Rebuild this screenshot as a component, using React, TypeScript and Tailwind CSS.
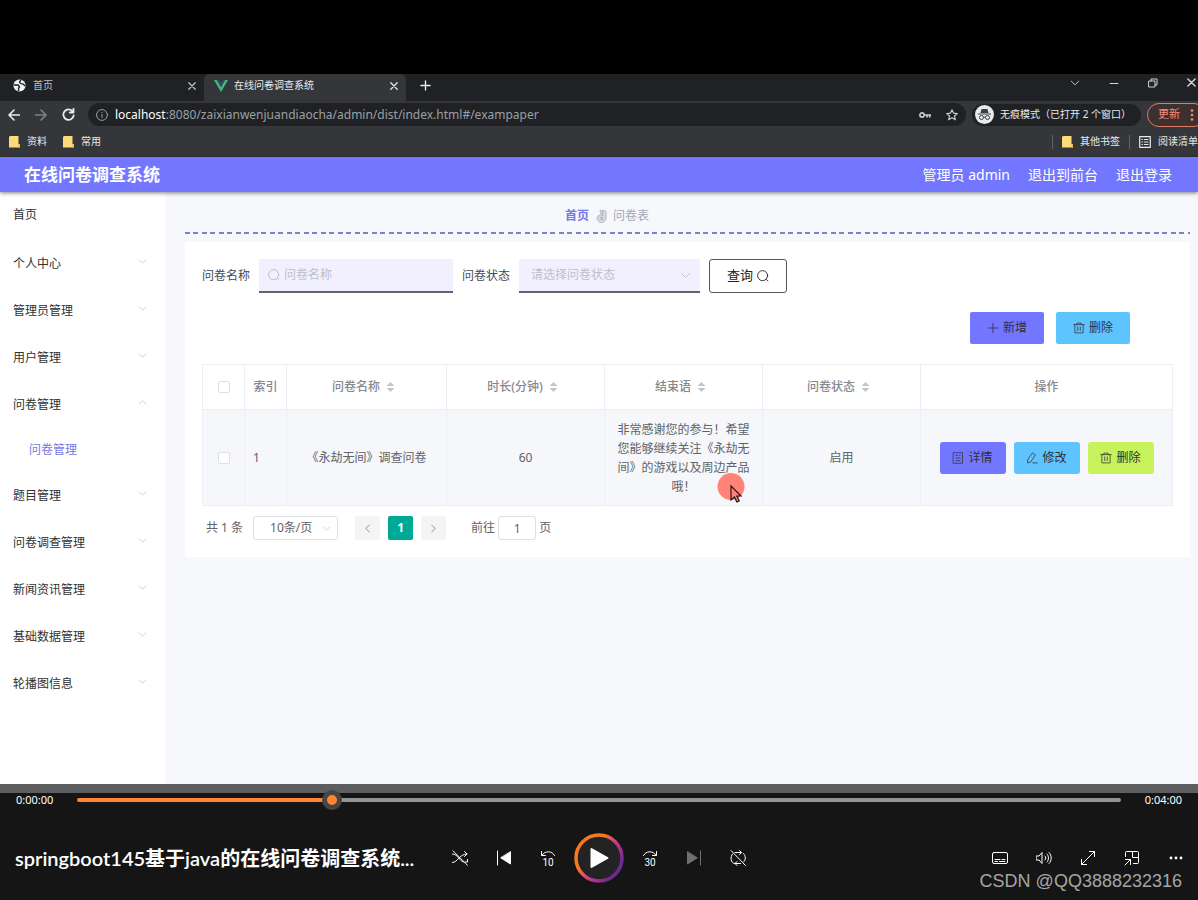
import { useState } from "react";
import type { CSSProperties, ReactNode } from "react";

const menu = [
  { label: "个人中心" },
  { label: "管理员管理" },
  { label: "用户管理" },
  { label: "问卷管理", children: ["问卷管理"] },
  { label: "题目管理" },
  { label: "问卷调查管理" },
  { label: "新闻资讯管理" },
  { label: "基础数据管理" },
  { label: "轮播图信息" },
];

const columns = ["问卷名称", "时长(分钟)", "结束语", "问卷状态"];

const rows = [
  {
    id: 1,
    name: "《永劫无间》调查问卷",
    minutes: 60,
    ending: "非常感谢您的参与！希望您能够继续关注《永劫无间》的游戏以及周边产品哦！",
    status: "启用",
  },
];

type IconProps = { className?: string; box?: number; width?: number; children: ReactNode };

function Icon({ className = "size-4", box = 16, width = 1, children }: IconProps) {
  return (
    <svg
      className={`shrink-0 ${className}`}
      viewBox={`0 0 ${box} ${box}`}
      fill="none"
      stroke="currentColor"
      strokeWidth={width}
      strokeLinecap="round"
      strokeLinejoin="round"
      aria-hidden="true"
    >
      {children}
    </svg>
  );
}

const Chevron = ({ className = "size-3", up = false }: { className?: string; up?: boolean }) => (
  <Icon className={className} width={1.4}>
    <path d={up ? "M2 11 8 5l6 6" : "M2 5l6 6 6-6"} />
  </Icon>
);

const SearchIcon = ({ className }: { className?: string }) => (
  <Icon className={className} width={1.2}>
    <circle cx="7.5" cy="7.5" r="6.7" />
    <path d="m12.3 12.5 2.2 2.2" />
  </Icon>
);

const TrashIcon = () => (
  <Icon className="size-3">
    <path d="M1 3.5h14M5 3.5v-2h6v2M2.5 3.5v11h11v-11M6.3 6.5v5M9.7 6.5v5" />
  </Icon>
);

const CloseIcon = ({ className = "size-2" }: { className?: string }) => (
  <Icon className={className} box={10} width={1.6}>
    <path d="m1 1 8 8M9 1 1 9" />
  </Icon>
);

const Folder = () => (
  <svg className="h-3 w-[11px] shrink-0" viewBox="0 0 11 12" aria-hidden="true">
    <path d="M1 0h8.5v8H11v3.5H0V1z" fill="#fddb7b" />
    <path d="M9.5 8H11v3.5H9.5z" fill="#e9b94e" />
  </svg>
);

function SortCaret() {
  return (
    <svg className="mr-1.5 mb-0.5 ml-1.5 inline-block h-3 w-[9px] fill-[#c0c4cc]" viewBox="0 0 9 12" aria-hidden="true">
      <path d="M4.5 1 8.5 5h-8zM4.5 11l-4-4h8z" />
    </svg>
  );
}

function BrowserChrome() {
  return (
    <div className="overflow-hidden bg-[#35363a] text-[10px] text-[#e8eaed]">
      <div className="flex h-[27px] bg-[#202124]">
        <div className="flex w-[204px] items-center pr-1 pb-1 pl-[13px]">
          <svg className="size-[13px]" viewBox="0 0 14 14" aria-hidden="true">
            <circle cx="7" cy="7" r="6.5" fill="#f1f3f4" />
            <path d="M1 6.5h4.5l1.5 2-1 1.5v3M8.5 1 7 3.5 8.5 5l2.5.5 2 2" fill="none" stroke="#202124" strokeWidth="1.5" />
          </svg>
          <span className="ml-[7px] flex-1 text-[#bdc1c6]">首页</span>
          <button aria-label="关闭首页" className="p-1 text-[#bdc1c6]"><CloseIcon /></button>
        </div>
        <div className="flex w-[202px] items-center rounded-t-md bg-[#35363a] pr-1 pb-1 pl-2.5">
          <svg className="h-3 w-[14px]" viewBox="0 0 14 12" aria-hidden="true">
            <path d="M0 0h3l4 7 4-7h3L7 12z" fill="#41b883" />
            <path d="M3 0h2.5L7 2.6 8.5 0H11L7 7z" fill="#35495e" />
          </svg>
          <span className="ml-1.5 flex-1">在线问卷调查系统</span>
          <button aria-label="关闭标签页" className="p-1"><CloseIcon /></button>
        </div>
        <button aria-label="新标签页" className="ml-3.5 self-center pb-1">
          <Icon className="size-[11px]" box={12} width={1.5}><path d="M6 1v10M1 6h10" /></Icon>
        </button>
        <div className="ml-auto flex items-center gap-[29px] pb-2.5 text-[#d0d2d5]">
          <button aria-label="搜索标签页"><Chevron className="size-[10px]" /></button>
          <button aria-label="最小化"><Icon className="size-[10px]" box={10}><path d="M1 5.5h8" /></Icon></button>
          <button aria-label="还原">
            <Icon className="size-[10px]" box={10}><path d="M1 3h6v6H1zM3 3V1h6v6H7" /></Icon>
          </button>
          <button aria-label="关闭窗口" className="pr-0.5"><CloseIcon className="size-[9px]" /></button>
        </div>
      </div>

      <div className="flex h-[27px] items-center">
        <div className="flex w-[88px] shrink-0 items-center gap-[15px] pl-2">
          <button aria-label="后退"><Icon className="size-3" box={12} width={1.6}><path d="M11.5 6H1M6 1 1 6l5 5" /></Icon></button>
          <button aria-label="前进" className="text-[#7e8185]"><Icon className="size-3" box={12} width={1.6}><path d="M.5 6H11M6 1l5 5-5 5" /></Icon></button>
          <button aria-label="刷新">
            <Icon className="size-[13px]" box={13} width={1.8}><path d="M10.8 3.6A5.2 5.2 0 1 0 11.7 7.5M11.5.8v3.7H7.8" /></Icon>
          </button>
        </div>
        <div className="flex h-[23px] flex-1 items-center rounded-full bg-[#202124] pr-2 pl-2">
          <Icon className="size-3 text-[#9aa0a6]" box={12}><circle cx="6" cy="6" r="5.4" /><path d="M6 5.5v3M6 3.4v.2" /></Icon>
          <p className="ml-[7px] flex-1 text-xs text-[#9aa0a6]">
            <span className="text-white">localhost</span>:8080/zaixianwenjuandiaocha/admin/dist/index.html#/exampaper
          </p>
          <svg className="h-2 w-3" viewBox="0 0 12 8" fill="none" stroke="#c6c9cc" strokeWidth="1.7" aria-hidden="true">
            <circle cx="3" cy="4" r="2.1" /><path d="M5.1 4H12M8 4v2.5M10.7 4v2.5" />
          </svg>
          <button aria-label="收藏" className="ml-[15px]">
            <Icon className="size-3 text-[#c6c9cc]" width={1.6}><path d="m8 1 2.1 4.6 5 .5-3.8 3.3 1.2 5L8 11.8l-4.5 2.6 1.2-5L.9 6.1l5-.5z" /></Icon>
          </button>
        </div>
        <div className="mx-1.5 flex h-[22px] shrink-0 items-center rounded-full bg-[#202124] pr-2.5 pl-[3px]">
          <svg className="size-[19px]" viewBox="0 0 19 19" aria-hidden="true">
            <circle cx="9.5" cy="9.5" r="9.5" fill="#e8eaed" />
            <path d="M6.5 4h6l1 4h-8zM3 8.5h13v1H3z" fill="#3c4043" />
            <g fill="none" stroke="#3c4043"><circle cx="6.5" cy="12.5" r="2" /><circle cx="12.5" cy="12.5" r="2" /><path d="M8.5 12.2h2" /></g>
          </svg>
          <span className="ml-1.5">无痕模式（已打开 2 个窗口）</span>
        </div>
        <button className="-mr-2 flex h-6 w-[59px] shrink-0 items-center rounded-full border border-[#e07a68] bg-[#3d302f] pl-2.5 text-[11px] text-[#f28b7c]">
          更新
          <svg className="ml-2.5 h-3 w-1 fill-current" viewBox="0 0 4 12" aria-hidden="true">
            <circle cx="2" cy="1.5" r="1.3" /><circle cx="2" cy="6" r="1.3" /><circle cx="2" cy="10.5" r="1.3" />
          </svg>
        </button>
      </div>

      <div className="flex h-[29px] items-center pb-0.5 pl-[9px] whitespace-nowrap">
        <a href="#ziliao" className="flex items-center gap-[7px]"><Folder />资料</a>
        <a href="#changyong" className="ml-4 flex items-center gap-[7px]"><Folder />常用</a>
        <div className="ml-auto flex items-center">
          <span className="mr-[9px] h-3.5 w-px bg-[#5f6368]" />
          <a href="#other" className="flex items-center gap-[7px]"><Folder />其他书签</a>
          <span className="mx-[9px] h-3.5 w-px bg-[#5f6368]" />
          <a href="#reading" className="flex items-center gap-[7px]">
            <Icon className="size-3" box={12} width={1.2}><path d="M.7.7h10.6v10.6H.7zM3 3.5h.5M5.5 3.5H9M3 6h.5M5.5 6H9M3 8.5h.5M5.5 8.5H9" /></Icon>
            阅读清单
          </a>
        </div>
      </div>
    </div>
  );
}

function Sidebar() {
  return (
    <nav className="w-[165px] shrink-0 bg-white text-xs text-[#303133]">
      <a href="#home" className="flex h-12 items-center px-[13px] pb-0.5">首页</a>
      {menu.map((item) => (
        <div key={item.label}>
          <button className="flex h-[47px] w-full items-center justify-between pr-[18px] pl-[13px]">
            {item.label}
            <Chevron className="mb-1 size-[9px] text-[#c0c4cc]" up={!!item.children} />
          </button>
          {item.children?.map((child) => (
            <a key={child} href="#exampaper" className="flex h-11 items-center pl-[29px] text-[#7377e8]">{child}</a>
          ))}
        </div>
      ))}
    </nav>
  );
}

function Filters() {
  return (
    <form className="flex items-center gap-[9px] text-xs text-[#47494f]" onSubmit={(e) => e.preventDefault()}>
      <div className="flex items-center gap-[9px]">
        <label htmlFor="name">问卷名称</label>
        <div className="flex h-[34px] w-[194px] items-center border-b-2 border-[#63636b] bg-[#f2f0fe] pl-[9px]">
          <SearchIcon className="size-3 text-[#b4b8c1]" />
          <input id="name" placeholder="问卷名称" className="ml-1 w-full bg-transparent outline-none placeholder:text-[#bcc0ca]" />
        </div>
      </div>
      <div className="flex items-center gap-[9px]">
        <label htmlFor="status">问卷状态</label>
        <div className="flex h-[34px] w-[181px] items-center border-b-2 border-[#63636b] bg-[#f2f0fe] pr-[9px] pl-3 text-[#bcc0ca]">
          <select id="status" className="w-full appearance-none bg-transparent outline-none">
            <option>请选择问卷状态</option>
            <option>启用</option>
          </select>
          <Chevron className="size-[11px]" />
        </div>
      </div>
      <button className="flex h-[34px] w-[78px] items-center justify-center gap-1 rounded-[3px] border border-[#55565c] text-[13px] text-[#222]">
        查询 <SearchIcon className="size-3" />
      </button>
    </form>
  );
}

function SurveyTable() {
  const [checked, setChecked] = useState(false);
  const cell = "border border-[#ebeef5]";
  const box = "mx-auto block size-3 appearance-none rounded-xs border border-[#dcdfe6] bg-white checked:bg-[#7377ff]";
  const action = "flex h-8 w-[66px] items-center justify-center gap-1 rounded-[3px] text-xs text-[#303133]";

  return (
    <table className="mt-5 w-full table-fixed border-collapse text-xs text-[#606266]">
      <colgroup>
        <col className="w-[42px]" />
        <col className="w-[42px]" />
        <col className="w-[160px]" />
        <col className="w-[158px]" />
        <col className="w-[158px]" />
        <col className="w-[158px]" />
        <col />
      </colgroup>
      <thead>
        <tr className="h-[45px] text-[#85888f]">
          <th className={cell}>
            <input type="checkbox" aria-label="全选" className={box} checked={checked} onChange={(e) => setChecked(e.target.checked)} />
          </th>
          <th className={`${cell} font-medium`}>索引</th>
          {columns.map((name) => (
            <th key={name} className={`${cell} font-medium`}>{name}<SortCaret /></th>
          ))}
          <th className={`${cell} font-medium`}>操作</th>
        </tr>
      </thead>
      <tbody>
        {rows.map((row) => (
          <tr key={row.id} className="h-24 bg-[#f5f7fb] text-center">
            <td className={cell}>
              <input type="checkbox" aria-label="选择第 1 行" className={box} checked={checked} onChange={(e) => setChecked(e.target.checked)} />
            </td>
            <td className={`${cell} pl-2 text-left`}>{row.id}</td>
            <td className={cell}>{row.name}</td>
            <td className={cell}>{row.minutes}</td>
            <td className={`${cell} relative px-3 text-left leading-[19px]`}>
              <p className="text-center">{row.ending}</p>
              <svg className="absolute right-[17px] bottom-0 h-8 w-7" viewBox="0 0 28 32" aria-hidden="true">
                <circle cx="14" cy="13.5" r="13.5" fill="#ff8379" />
                <path d="M14 13v14l3.5-3 2.3 5 2.4-1-2.3-5h4.1z" fill="#ff8379" stroke="#2a1515" strokeWidth="1.2" />
              </svg>
            </td>
            <td className={cell}>{row.status}</td>
            <td className={cell}>
              <div className="flex justify-center gap-2">
                <button className={`${action} bg-[#7377ff]`}>
                  <Icon className="size-3"><path d="M2 1h12v14H2zM5 4.5h2.5M5 8h6M5 11.5h6M10 4.5h1" /></Icon>详情
                </button>
                <button className={`${action} bg-[#5ec4ff]`}>
                  <Icon className="size-3"><path d="M9 1.5 12.5 4 6 13.5l-4 1L2.5 10zM9 14.5h6" /></Icon>修改
                </button>
                <button className={`${action} bg-[#c8f25c]`}><TrashIcon />删除</button>
              </div>
            </td>
          </tr>
        ))}
      </tbody>
    </table>
  );
}

function Pagination() {
  return (
    <div className="mt-2.5 flex h-6 items-center px-1 text-xs text-[#606266]">
      <span>共 1 条</span>
      <div className="ml-2.5 flex h-6 w-[85px] items-center rounded-[3px] border border-[#dcdfe6] pr-1.5 pl-4">
        <select aria-label="每页条数" className="w-full appearance-none bg-transparent outline-none">
          <option>10条/页</option>
          <option>20条/页</option>
        </select>
        <Chevron className="size-[9px] text-[#c0c4cc]" />
      </div>
      <div className="ml-[17px] flex gap-2">
        <button aria-label="上一页" className="flex h-6 w-[25px] items-center justify-center rounded-xs bg-[#f4f4f5] text-[#b4b7be]">
          <Icon className="size-[9px]" width={2}><path d="M11 2 5 8l6 6" /></Icon>
        </button>
        <button className="h-6 w-[25px] rounded-xs bg-[#00a896] font-bold text-white">1</button>
        <button aria-label="下一页" className="flex h-6 w-[25px] items-center justify-center rounded-xs bg-[#f4f4f5] text-[#b4b7be]">
          <Icon className="size-[9px]" width={2}><path d="m5 2 6 6-6 6" /></Icon>
        </button>
      </div>
      <label className="ml-[25px] flex items-center gap-[3px]">
        前往
        <input defaultValue="1" className="h-6 w-[38px] rounded-[3px] border border-[#dcdfe6] text-center outline-none" />
        页
      </label>
    </div>
  );
}

function AdminPage() {
  return (
    <>
      <header className="relative flex h-[35px] items-center bg-[#7377ff] pr-[26px] pl-6 text-white shadow-[0_1px_4px_rgba(0,0,0,0.5)]">
        <h1 className="text-[17px] font-bold">在线问卷调查系统</h1>
        <div className="ml-auto flex gap-[18px] text-sm">
          <span>管理员 admin</span>
          <a href="#front">退出到前台</a>
          <a href="#logout">退出登录</a>
        </div>
      </header>
      <div className="flex flex-1 bg-[#f6f8fb]">
        <Sidebar />
        <main className="min-w-0 flex-1 pr-2 pl-5">
          <div className="flex h-10 items-center justify-center gap-1.5 pt-2 pr-[161px] text-xs text-[#a0a8b6]">
            <a href="#home" className="font-bold text-[#7377e8]">首页</a>
            <svg className="h-3.5 w-3" viewBox="0 0 12 14" aria-hidden="true">
              <path d="M5 1.5h4.5A1.5 1.5 0 0 1 11 3v6a4.5 4.5 0 1 1-9 0c0-2 1.500-3 4-3z" fill="#d5d8df" stroke="#b8bcc5" />
              <path d="M7.5 2v5M4.5 8.5h3v2h-2" fill="none" stroke="#a9aeb8" />
            </svg>
            <span>问卷表</span>
          </div>
          <div className="h-0.5 bg-[repeating-linear-gradient(90deg,#7f82cf_0_5px,transparent_5px_8px,#7f82cf_8px_13px,transparent_13px_17px)]" />
          <div className="mt-2 bg-white p-[17px]">
            <Filters />
            <div className="mt-[19px] flex justify-end gap-3 pr-[43px] text-xs text-[#303133]">
              <button className="flex h-8 w-[74px] items-center justify-center gap-1 rounded-xs bg-[#7377ff]">
                <Icon className="size-3"><path d="M8 1.5v13M1.5 8h13" /></Icon>新增
              </button>
              <button className="flex h-8 w-[74px] items-center justify-center gap-1 rounded-xs bg-[#5ec4ff]"><TrashIcon />删除</button>
            </div>
            <SurveyTable />
            <Pagination />
          </div>
        </main>
      </div>
    </>
  );
}

function PlayerButton({ label, className = "", children }: { label: string; className?: string; children: ReactNode }) {
  return (
    <button aria-label={label} className={`flex size-11 items-center justify-center ${className}`}>{children}</button>
  );
}

// Skip arrow with the number of seconds under it
function SkipButton({ label, seconds, arrow }: { label: string; seconds: number; arrow: string }) {
  return (
    <PlayerButton label={label} className="flex-col pt-1">
      <svg className="h-[6px] w-4" viewBox="0 0 16 6" fill="none" stroke="currentColor" strokeLinecap="round" strokeLinejoin="round" aria-hidden="true">
        <path d={arrow} />
      </svg>
      <span className="font-[Roboto,sans-serif] text-[10px] leading-3">{seconds}</span>
    </PlayerButton>
  );
}

function Player() {
  const [time, setTime] = useState(57.4);
  const played = { "--played": `${(time / 240) * 100}%` } as CSSProperties;

  return (
    <footer className="relative bg-[#151515] text-white">
      <div className="h-[9px] bg-[#5d5e60]" />
      <div className="flex h-3.5 items-center text-[11px]">
        <span className="w-[77px] pl-4">0:00:00</span>
        <input
          type="range"
          aria-label="播放进度"
          min={0}
          max={240}
          step="any"
          value={time}
          onChange={(e) => setTime(Number(e.target.value))}
          style={played}
          className="relative h-5 min-w-0 flex-1 appearance-none bg-transparent [&::-webkit-slider-runnable-track]:h-1 [&::-webkit-slider-runnable-track]:rounded-full [&::-webkit-slider-runnable-track]:bg-[linear-gradient(to_right,#ff8533_var(--played),#949494_var(--played))] [&::-webkit-slider-thumb]:-mt-2 [&::-webkit-slider-thumb]:size-5 [&::-webkit-slider-thumb]:appearance-none [&::-webkit-slider-thumb]:rounded-full [&::-webkit-slider-thumb]:border-5 [&::-webkit-slider-thumb]:border-[#454545] [&::-webkit-slider-thumb]:bg-[#ff8533]"
        />
        <span className="w-[77px] pr-4 text-right">0:04:00</span>
      </div>
      <div className="grid grid-cols-[1fr_auto_1fr] items-center pt-[26px] pb-[17px]">
        <h2 className="truncate pl-[15px] font-[Lato,'Noto_Sans_CJK_SC',sans-serif] text-xl font-semibold">springboot145基于java的在线问卷调查系统...</h2>
        <div className="flex items-center">
          <PlayerButton label="随机播放">
            <Icon><path d="M.5 12.5C6 12.5 7 4 15 4M.5 4C6 4 8 12 11.5 12M12.5 1.5 15 4l-2.500 2.500M15.5 9.5V12H13M1 .8l14.500 14.500" /></Icon>
          </PlayerButton>
          <PlayerButton label="上一个">
            <Icon><path d="M1.5 1v14" /><path d="M14.5 2v12L5 8z" fill="currentColor" /></Icon>
          </PlayerButton>
          <SkipButton label="后退 10 秒" seconds={10} arrow="M1.5.5v4h4M2 4.200C5-.5 12-.5 14.5 4.500" />
          <button aria-label="播放" className="mx-1">
            <svg className="size-[50px]" viewBox="0 0 50 50" aria-hidden="true">
              <defs>
                <linearGradient id="ring" x1="0.1" y1="0.2" x2="0.9" y2="0.8">
                  <stop offset="0.3" stopColor="#f47920" />
                  <stop offset="0.45" stopColor="#e8506a" />
                  <stop offset="0.65" stopColor="#c42f91" />
                  <stop offset="0.95" stopColor="#6b2c8f" />
                </linearGradient>
              </defs>
              <circle cx="25" cy="25" r="23" fill="#232323" stroke="url(#ring)" strokeWidth="3.5" />
              <path d="M17.5 16v18l16-9z" fill="#fff" stroke="#fff" strokeWidth="2" strokeLinejoin="round" />
            </svg>
          </button>
          <SkipButton label="前进 30 秒" seconds={30} arrow="M14.5.5v4h-4M14 4.200C11-.5 4-.5 1.5 4.500" />
          <PlayerButton label="下一个" className="text-[#707070]">
            <Icon><path d="M14.5 1v14" /><path d="M1.5 2v12L11 8z" fill="currentColor" /></Icon>
          </PlayerButton>
          <PlayerButton label="循环播放">
            <Icon><path d="M5 2.5h6.5M9.5.5l2 2-2 2M13.5 3.5C16 6 16 10 13.5 12M2.5 4C0 6.5.5 13.5 5 13.5h5.500M7 11.5l-2 2 2 2M1 .5l14.500 15" /></Icon>
          </PlayerButton>
        </div>
        <div className="flex justify-end">
          <PlayerButton label="字幕">
            <Icon><rect x=".5" y="2.5" width="15" height="11" rx="1.5" /><path d="M3 9.5h5M10 9.5h3M3 11.5h2.500M7.5 11.5H13" /></Icon>
          </PlayerButton>
          <PlayerButton label="音量">
            <Icon><path d="M.5 6H3l3-3.500v11L3 10H.5zM9 6c1 1 1 3 0 4M11 4c2 2 2 6 0 8M13 2.500c3 3 3 8 0 11" /></Icon>
          </PlayerButton>
          <PlayerButton label="全屏">
            <Icon><path d="m1.5 14.500 13-13M9.5 1.5h5v5M1.5 9.5v5h5" /></Icon>
          </PlayerButton>
          <PlayerButton label="小窗播放">
            <Icon><path d="M1.5 6.500v-4a1 1 0 0 1 1-1h11a1 1 0 0 1 1 1v10a1 1 0 0 1-1 1h-4M8.5 1.5v6h6M1.5 9.5h5v5M6.5 9.5 1 15" /></Icon>
          </PlayerButton>
          <PlayerButton label="更多">
            <svg className="size-4 fill-current" viewBox="0 0 16 16" aria-hidden="true">
              <circle cx="3" cy="8" r="1.4" /><circle cx="8" cy="8" r="1.4" /><circle cx="13" cy="8" r="1.4" />
            </svg>
          </PlayerButton>
        </div>
      </div>
      <span className="absolute right-4 bottom-[7px] font-['Liberation_Sans',sans-serif] text-lg leading-6 text-[#a5a5a5]">CSDN @QQ3888232316</span>
    </footer>
  );
}

export default function App() {
  return (
    <div className="flex min-h-screen flex-col bg-[#f6f8fb] font-['Noto_Sans','Noto_Sans_CJK_SC',sans-serif]">
      <div className="h-[74px] bg-black" />
      <BrowserChrome />
      <AdminPage />
      <Player />
    </div>
  );
}
